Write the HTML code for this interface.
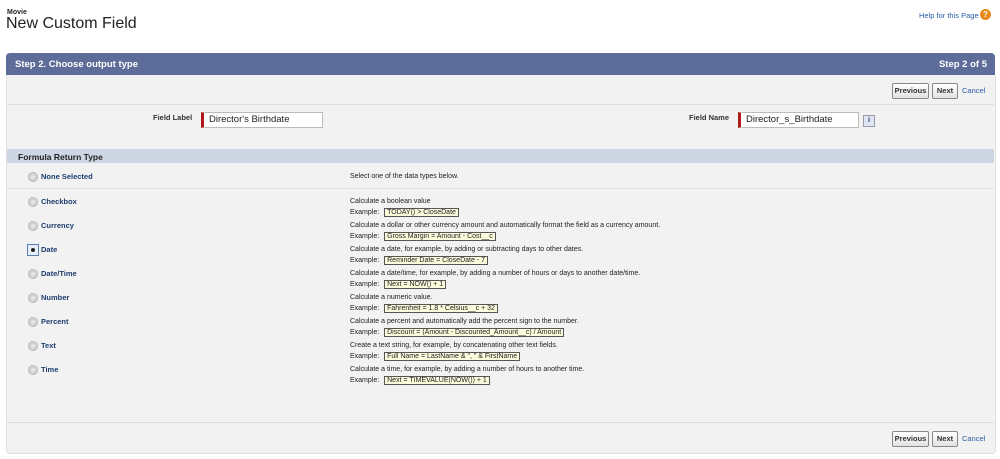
<!DOCTYPE html>
<html><head><style>
body{margin:0;width:1000px;height:459px;background:#fff;font-family:"Liberation Sans",Arial,sans-serif;position:relative;overflow:hidden;color:#222}
.a{position:absolute}
.hdr{left:6px;top:53px;width:989px;height:22px;background:#5d6c98;border-radius:4px 4px 0 0;color:#fff;font-weight:bold;font-size:9.5px}
.panel{left:6px;top:75px;width:988px;height:378px;background:#f2f2f2;border:1px solid #e0e0e0;border-top:none;border-radius:0 0 4px 4px}
.btn{position:absolute;height:14px;border:1px solid #888;border-radius:2px;background:linear-gradient(#fff,#e2e2e2);font-size:7.5px;font-weight:bold;line-height:14px;text-align:center;color:#333}
.lnk{color:#2b5ca8;font-size:7.5px}
.lbl{font-size:7.5px;font-weight:bold;color:#333}
.inp{position:absolute;height:14px;border:1px solid #bbb;background:#fff;font-size:9.5px;line-height:14px;padding-left:5px;border-left:3px solid #b21a1a}
.rad{position:absolute;width:8px;height:8px;border-radius:50%;background:radial-gradient(#eee,#bbb);border:1px solid #bbb}
.rl{position:absolute;font-size:7.5px;font-weight:bold;color:#1c3d6e}
.d{position:absolute;left:350px;font-size:7px;color:#222;line-height:11px}
.ex{border:1px solid #555;background:#fcfbdc;padding:0 2px;margin-left:3px}
</style></head><body>
<div class="a" style="left:7px;top:9px;font-size:7px;font-weight:bold">Movie</div>
<div class="a" style="left:6px;top:15px;font-size:16px">New Custom Field</div>
<div class="a lnk" style="left:919px;top:11px">Help for this Page</div>
<div class="a" style="left:980px;top:9px;width:11px;height:11px;border-radius:50%;background:#e88a1a;color:#fff;font-size:8px;font-weight:bold;text-align:center;line-height:11px">?</div>
<div class="a hdr"><span class="a" style="left:9px;top:6px">Step 2. Choose output type</span><span class="a" style="right:8px;top:6px">Step 2 of 5</span></div>
<div class="a panel"></div>
<div class="btn" style="left:892px;top:83px;width:35px">Previous</div>
<div class="btn" style="left:932px;top:83px;width:24px">Next</div>
<div class="a lnk" style="left:962px;top:86px">Cancel</div>
<div class="a" style="left:7px;top:104px;width:987px;height:1px;background:#ddd"></div>
<div class="a lbl" style="left:153px;top:113px">Field Label</div>
<div class="inp" style="left:201px;top:112px;width:113px">Director's Birthdate</div>
<div class="a lbl" style="left:689px;top:113px">Field Name</div>
<div class="inp" style="left:738px;top:112px;width:112px">Director_s_Birthdate</div>
<div class="a" style="left:863px;top:115px;width:10px;height:10px;border:1px solid #99a;background:#dde6f2;font-size:7px;color:#336;font-weight:bold;text-align:center;line-height:10px">i</div>
<div class="a" style="left:7px;top:149px;width:987px;height:14px;background:#cfd6e3"></div>
<div class="a" style="left:18px;top:152px;font-size:8.5px;font-weight:bold;color:#222">Formula Return Type</div>
<div class="rad" style="left:28px;top:172px"></div><div class="rl" style="left:41px;top:172px">None Selected</div>
<div class="d" style="top:171px">Select one of the data types below.</div>
<div class="a" style="left:7px;top:188px;width:987px;height:1px;background:#e2e2e2"></div>

<div class="rad" style="left:28px;top:197px"></div><div class="rl" style="left:41px;top:197px">Checkbox</div>
<div class="d" style="top:196px">Calculate a boolean value<br>Example: <span class="ex">TODAY() &gt; CloseDate</span></div>
<div class="rad" style="left:28px;top:221px"></div><div class="rl" style="left:41px;top:221px">Currency</div>
<div class="d" style="top:220px">Calculate a dollar or other currency amount and automatically format the field as a currency amount.<br>Example: <span class="ex">Gross Margin = Amount - Cost__c</span></div>
<div class="a" style="left:27px;top:244px;width:10px;height:10px;border:1px solid #5b7fb8;background:#e8eef8"><div class="a" style="left:3px;top:3px;width:4px;height:4px;border-radius:50%;background:#222"></div></div><div class="rl" style="left:41px;top:245px">Date</div>
<div class="d" style="top:244px">Calculate a date, for example, by adding or subtracting days to other dates.<br>Example: <span class="ex">Reminder Date = CloseDate - 7</span></div>
<div class="rad" style="left:28px;top:269px"></div><div class="rl" style="left:41px;top:269px">Date/Time</div>
<div class="d" style="top:268px">Calculate a date/time, for example, by adding a number of hours or days to another date/time.<br>Example: <span class="ex">Next = NOW() + 1</span></div>
<div class="rad" style="left:28px;top:293px"></div><div class="rl" style="left:41px;top:293px">Number</div>
<div class="d" style="top:292px">Calculate a numeric value.<br>Example: <span class="ex">Fahrenheit = 1.8 * Celsius__c + 32</span></div>
<div class="rad" style="left:28px;top:317px"></div><div class="rl" style="left:41px;top:317px">Percent</div>
<div class="d" style="top:316px">Calculate a percent and automatically add the percent sign to the number.<br>Example: <span class="ex">Discount = (Amount - Discounted_Amount__c) / Amount</span></div>
<div class="rad" style="left:28px;top:341px"></div><div class="rl" style="left:41px;top:341px">Text</div>
<div class="d" style="top:340px">Create a text string, for example, by concatenating other text fields.<br>Example: <span class="ex">Full Name = LastName &amp; ", " &amp; FirstName</span></div>
<div class="rad" style="left:28px;top:365px"></div><div class="rl" style="left:41px;top:365px">Time</div>
<div class="d" style="top:364px">Calculate a time, for example, by adding a number of hours to another time.<br>Example: <span class="ex">Next = TIMEVALUE(NOW()) + 1</span></div>

<div class="a" style="left:7px;top:422px;width:987px;height:1px;background:#ddd"></div>
<div class="btn" style="left:892px;top:431px;width:35px">Previous</div>
<div class="btn" style="left:932px;top:431px;width:24px">Next</div>
<div class="a lnk" style="left:962px;top:434px">Cancel</div>
</body></html>
